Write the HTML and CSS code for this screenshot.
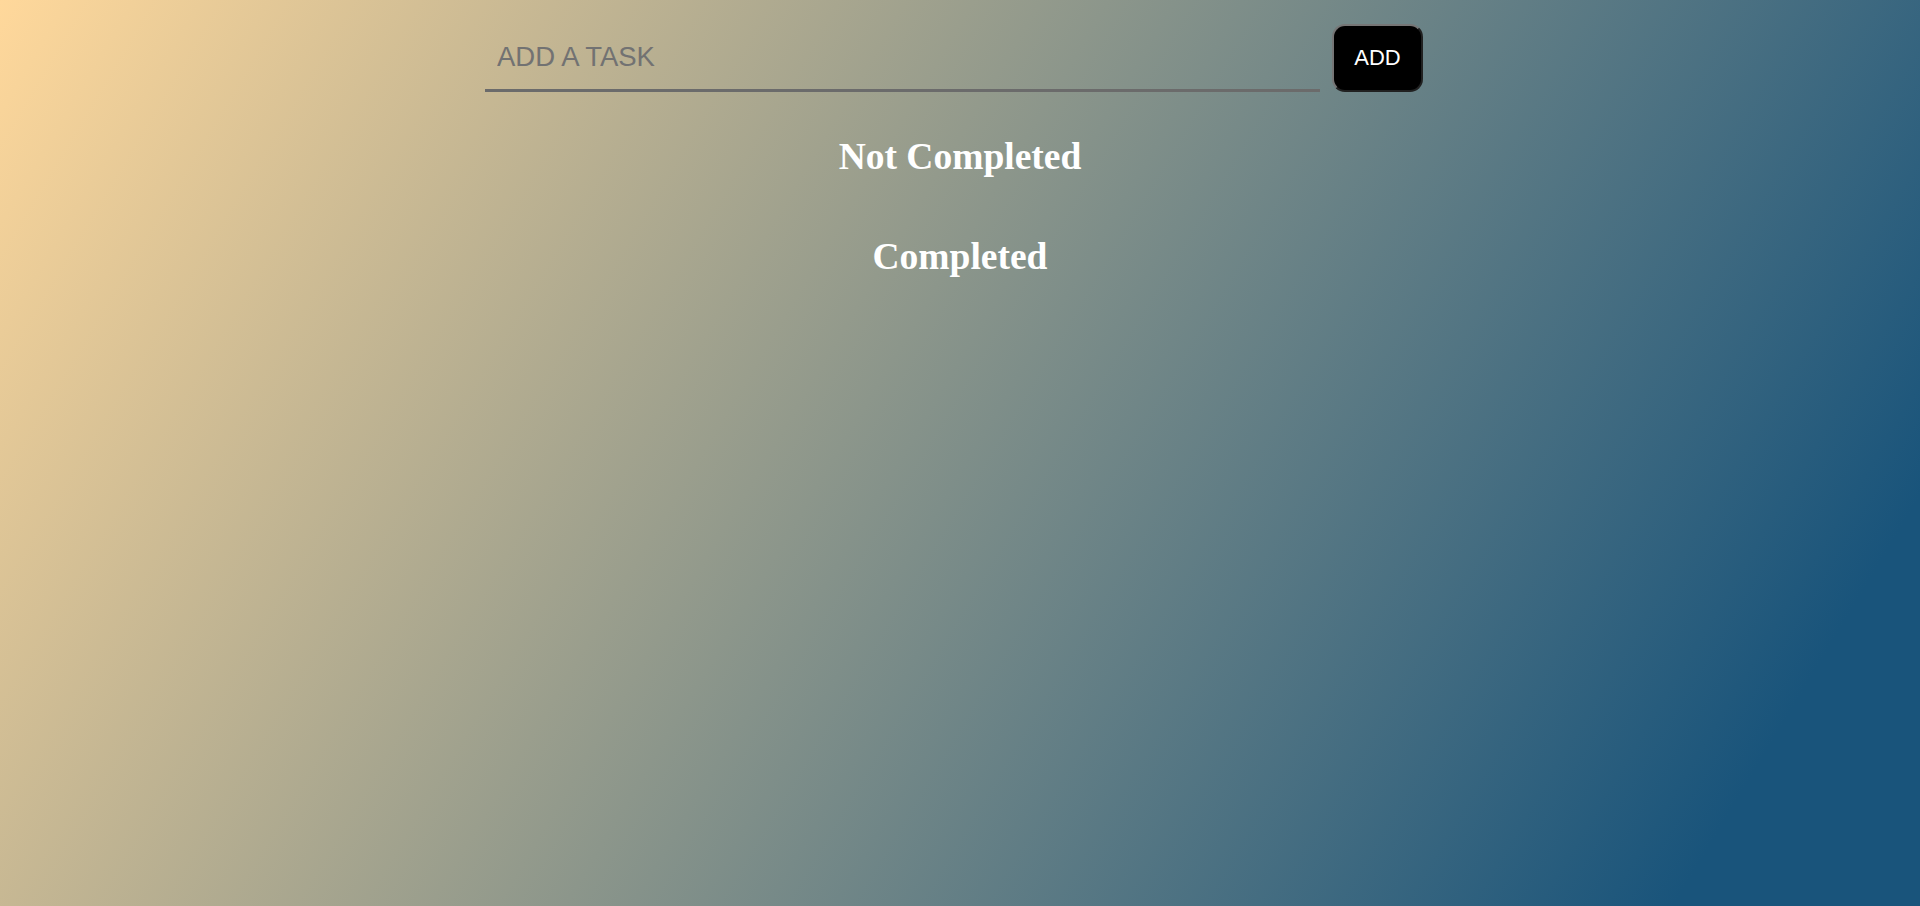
FILE: index.html
```html
<!DOCTYPE html>
<html lang="en">
<head>
<meta charset="utf-8">
<title>Todo</title>
<link rel="stylesheet" href="styles.css">
</head>
<body>
<main class="app">
  <form class="add-row">
    <input class="task-input" type="text" placeholder="ADD A TASK">
    <button class="add-btn" type="button">ADD</button>
  </form>
  <section class="group">
    <h2 class="group-title first">Not Completed</h2>
  </section>
  <section class="group">
    <h2 class="group-title second">Completed</h2>
  </section>
</main>
</body>
</html>
```

FILE: styles.css
```css
html, body {
  margin: 0;
  padding: 0;
  height: 100%;
}

body {
  background: linear-gradient(121deg, #ffd89b 0%, #19547b 90%);
  font-family: "Liberation Serif", "Times New Roman", serif;
  min-height: 906px;
}

.app {
  display: flex;
  flex-direction: column;
  align-items: center;
}

.add-row {
  display: flex;
  align-items: stretch;
  margin: 24px 0 0 0;
  padding-left: 485px;
  width: 1920px;
  box-sizing: border-box;
}

.task-input {
  width: 835px;
  height: 68px;
  box-sizing: border-box;
  background: transparent;
  border: none;
  border-bottom: 3px solid #6b6b6b;
  outline: none;
  padding: 0 12px;
  margin: 0;
  font-family: "Liberation Sans", Arial, sans-serif;
  font-size: 27.5px;
  color: #333;
}

.task-input::placeholder {
  color: #727272;
}

.add-btn {
  width: 91px;
  height: 68px;
  margin-left: 12px;
  box-sizing: border-box;
  background: #000;
  color: #fff;
  border: 2px outset #767676;
  border-radius: 13px;
  font-family: "Liberation Sans", Arial, sans-serif;
  font-size: 22px;
  padding: 0;
  cursor: pointer;
}

.group {
  display: flex;
  justify-content: center;
  width: 100%;
}

.group-title {
  margin: 0;
  color: #fff;
  font-size: 37.5px;
  line-height: 43px;
  font-weight: bold;
  text-align: center;
}

.group-title.first {
  margin-top: 43px;
}

.group-title.second {
  margin-top: 57px;
}
```
